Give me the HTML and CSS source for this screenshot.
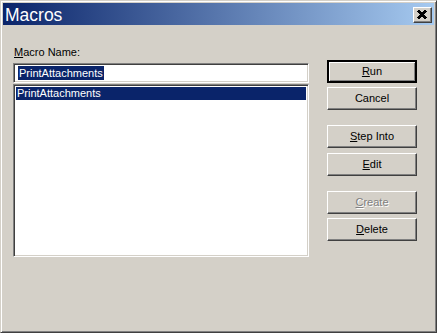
FILE: index.html
```html
<!DOCTYPE html>
<html lang="en">
<head>
    <meta charset="UTF-8">
    <title>Macros</title>
    <link rel="stylesheet" href="styles.css">
</head>
<body>
    <div class="window">
        <div class="titlebar">
            <div class="title">Macros</div>
            <div class="close-btn">
                <svg width="10" height="9" viewBox="0 0 10 9" shape-rendering="crispEdges">
                    <path d="M1 0.5L9 8.5M9 0.5L1 8.5" stroke="#000" stroke-width="2.2" fill="none"/>
                </svg>
            </div>
        </div>
        <div class="content">
            <div class="left">
                <div class="label"><u>M</u>acro Name:</div>
                <div class="textfield"><span class="sel">PrintAttachments</span></div>
                <div class="listbox">
                    <div class="item selected">PrintAttachments</div>
                </div>
            </div>
            <div class="buttons">
                <div class="btn default"><u>R</u>un</div>
                <div class="btn gap-small">Cancel</div>
                <div class="btn gap-big"><u>S</u>tep Into</div>
                <div class="btn gap-mid"><u>E</u>dit</div>
                <div class="btn gap-big disabled"><u>C</u>reate</div>
                <div class="btn gap-small"><u>D</u>elete</div>
            </div>
        </div>
    </div>
</body>
</html>
```

FILE: styles.css
```css
body {
    margin: 0;
    background: #fff;
    font-family: 'Liberation Sans', Arial, sans-serif;
    font-size: 11px;
    color: #000;
}
.window {
    width: 437px;
    height: 333px;
    box-sizing: border-box;
    background: #d4d0c8;
    border: 1px solid;
    border-color: #d4d0c8 #404040 #404040 #d4d0c8;
    box-shadow: inset 1px 1px #fff, inset -1px -1px #808080;
    padding: 2px;
    display: flex;
    flex-direction: column;
}
.titlebar {
    height: 22px;
    background: linear-gradient(to right, #0a246a, #a6caf0);
    display: flex;
    align-items: center;
    justify-content: space-between;
    padding: 0 2px 0 2px;
}
.title {
    color: #fff;
    font-size: 17.5px;
    line-height: 22px;
    padding-top: 1px;
}
.close-btn {
    width: 19px;
    height: 16px;
    box-sizing: border-box;
    background: #d4d0c8;
    border: 1px solid;
    border-color: #fff #404040 #404040 #fff;
    box-shadow: inset -1px -1px #808080;
    display: flex;
    align-items: center;
    justify-content: center;
    padding-right: 1px;
    margin-top: 1px;
}
.content {
    display: flex;
    padding: 21px 0 0 10px;
}
.left {
    width: 296px;
}
.label {
    height: 13px;
    line-height: 13px;
    padding-left: 1px;
}
.textfield {
    margin-top: 4px;
    height: 20px;
    box-sizing: border-box;
    background: #fff;
    border: 1px solid;
    border-color: #808080 #fff #fff #808080;
    box-shadow: inset 1px 1px #404040, inset -1px -1px #d4d0c8;
    padding: 2px 0 0 4px;
    line-height: 14px;
}
.sel {
    background: #0a246a;
    color: #fff;
    padding: 0 1px;
    display: inline-block;
}
.listbox {
    margin-top: 1px;
    height: 173px;
    box-sizing: border-box;
    background: #fff;
    border: 1px solid;
    border-color: #808080 #fff #fff #808080;
    box-shadow: inset 1px 1px #404040, inset -1px -1px #d4d0c8;
    padding: 2px;
}
.item {
    height: 13px;
    line-height: 13px;
    padding-left: 1px;
}
.item.selected {
    background: #0a246a;
    color: #fff;
}
.buttons {
    margin-left: 18px;
    margin-top: 14px;
    display: flex;
    flex-direction: column;
    width: 90px;
}
.btn {
    height: 23px;
    box-sizing: border-box;
    border: 1px solid;
    border-color: #fff #404040 #404040 #fff;
    box-shadow: inset -1px -1px #808080;
    text-align: center;
    line-height: 20px;
}
.btn.default {
    border: 2px solid #000;
    box-shadow: inset 1px 1px #fff, inset -1px -1px #808080;
    line-height: 19px;
}
.gap-small {
    margin-top: 4px;
}
.gap-mid {
    margin-top: 5px;
}
.gap-big {
    margin-top: 15px;
}
.btn.disabled {
    color: #808080;
    text-shadow: 1px 1px #fff;
}
```
